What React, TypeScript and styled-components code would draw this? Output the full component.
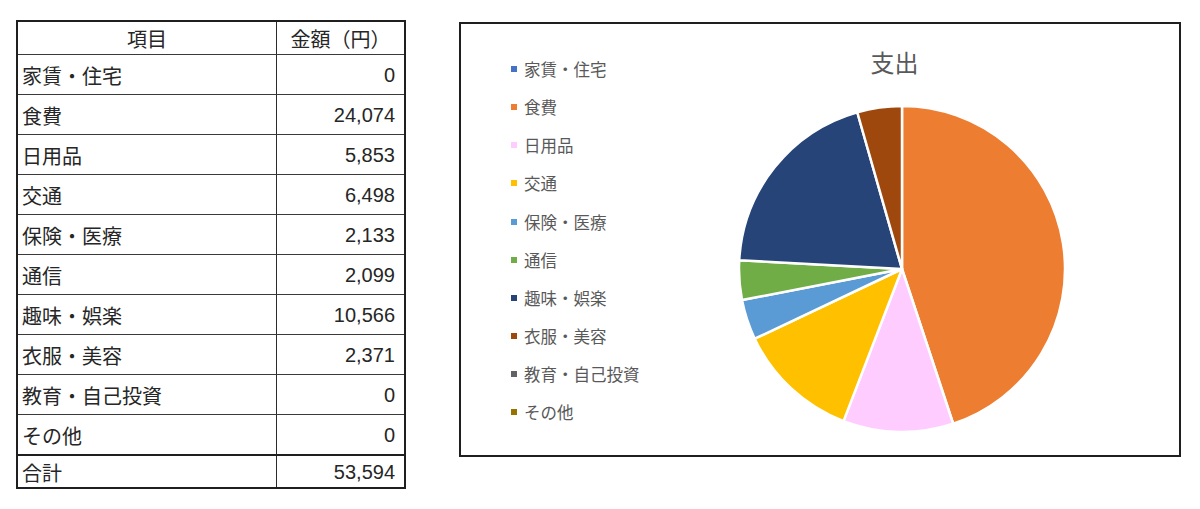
import React from "react";
import styled, { createGlobalStyle } from "styled-components";

const GlobalStyle = createGlobalStyle`
  html, body { margin: 0; padding: 0; background: #ffffff; }
  body { font-family: "Liberation Sans", "Noto Sans CJK JP", sans-serif; }
`;

type Item = { label: string; value: number; color: string };

const items: Item[] = [
  { label: "家賃・住宅", value: 0, color: "#4472C4" },
  { label: "食費", value: 24074, color: "#ED7D31" },
  { label: "日用品", value: 5853, color: "#FFCCFF" },
  { label: "交通", value: 6498, color: "#FFC000" },
  { label: "保険・医療", value: 2133, color: "#5B9BD5" },
  { label: "通信", value: 2099, color: "#70AD47" },
  { label: "趣味・娯楽", value: 10566, color: "#264478" },
  { label: "衣服・美容", value: 2371, color: "#9E480E" },
  { label: "教育・自己投資", value: 0, color: "#636363" },
  { label: "その他", value: 0, color: "#997300" },
];

const total = items.reduce((s, i) => s + i.value, 0);
const fmt = (n: number) => n.toLocaleString("en-US");

const Page = styled.div`
  display: flex;
  align-items: flex-start;
  padding: 20px 0 0 16px;
  gap: 53px;
`;

const TableBox = styled.div`
  width: 390px;
  box-sizing: border-box;
  border: 2px solid #1f1f1f;
  display: flex;
  flex-direction: column;
  color: #262626;
  font-size: 20px;
`;

const Row = styled.div<{ $h: number; $thick?: boolean; $last?: boolean }>`
  box-sizing: border-box;
  display: grid;
  grid-template-columns: 259px 1fr;
  height: ${(p) => p.$h}px;
  border-bottom: ${(p) => (p.$last ? "none" : p.$thick ? "2px solid #1f1f1f" : "1px solid #3a3a3a")};
`;

const Cell = styled.div<{ $align: "left" | "right" | "center" }>`
  display: flex;
  align-items: center;
  justify-content: ${(p) => (p.$align === "left" ? "flex-start" : p.$align === "right" ? "flex-end" : "center")};
  padding: ${(p) => (p.$align === "left" ? "1px 0 0 4px" : p.$align === "right" ? "1px 9px 0 0" : "0")};
  white-space: nowrap;
  &:first-child { border-right: 1px solid #2a2a2a; }
`;

const ChartBox = styled.div`
  margin-top: 2px;
  width: 722px;
  height: 435px;
  box-sizing: border-box;
  border: 2px solid #1f1f1f;
  display: flex;
  align-items: flex-start;
`;

const Legend = styled.div`
  width: 276px;
  box-sizing: border-box;
  padding: 26px 0 0 50px;
  display: flex;
  flex-direction: column;
`;

const LegendItem = styled.div`
  height: 38.15px;
  display: flex;
  align-items: center;
  gap: 7px;
  font-size: 16.5px;
  color: #595959;
  font-family: "Noto Sans CJK JP", sans-serif;
`;

const Swatch = styled.span<{ $c: string }>`
  width: 6px;
  height: 6px;
  background: ${(p) => p.$c};
  flex: none;
`;

const PieColumn = styled.div`
  width: 330px;
  display: flex;
  flex-direction: column;
  align-items: center;
`;

const Title = styled.div`
  margin-top: 23px;
  height: 30px;
  line-height: 30px;
  padding-right: 15px;
  font-size: 24px;
  color: #595959;
  font-family: "Noto Sans CJK JP", sans-serif;
`;

const PieSvg = styled.svg`
  margin-top: 27px;
  display: block;
`;

function Pie() {
  const r = 163;
  const cx = 165;
  const cy = 165;
  let acc = 0;
  const paths: React.ReactNode[] = [];
  items.forEach((it, idx) => {
    if (it.value <= 0) return;
    const a0 = (acc / total) * Math.PI * 2;
    acc += it.value;
    const a1 = (acc / total) * Math.PI * 2;
    const x0 = cx + r * Math.sin(a0);
    const y0 = cy - r * Math.cos(a0);
    const x1 = cx + r * Math.sin(a1);
    const y1 = cy - r * Math.cos(a1);
    const large = a1 - a0 > Math.PI ? 1 : 0;
    paths.push(
      <path
        key={idx}
        d={`M${cx},${cy} L${x0},${y0} A${r},${r} 0 ${large} 1 ${x1},${y1} Z`}
        fill={it.color}
        stroke="#ffffff"
        strokeWidth={2.5}
        strokeLinejoin="round"
      />
    );
  });
  return (
    <PieSvg width={330} height={330} viewBox="0 0 330 330">
      {paths}
    </PieSvg>
  );
}

export default function App() {
  return (
    <>
      <GlobalStyle />
      <Page>
        <TableBox>
          <Row $h={33}>
            <Cell $align="center">項目</Cell>
            <Cell $align="center">金額（円）</Cell>
          </Row>
          {items.map((it, i) => (
            <Row key={it.label} $h={i === items.length - 1 ? 41 : 40} $thick={i === items.length - 1}>
              <Cell $align="left">{it.label}</Cell>
              <Cell $align="right">{fmt(it.value)}</Cell>
            </Row>
          ))}
          <Row $h={31} $last>
            <Cell $align="left">合計</Cell>
            <Cell $align="right">{fmt(total)}</Cell>
          </Row>
        </TableBox>
        <ChartBox>
          <Legend>
            {items.map((it) => (
              <LegendItem key={it.label}>
                <Swatch $c={it.color} />
                {it.label}
              </LegendItem>
            ))}
          </Legend>
          <PieColumn>
            <Title>支出</Title>
            <Pie />
          </PieColumn>
        </ChartBox>
      </Page>
    </>
  );
}
